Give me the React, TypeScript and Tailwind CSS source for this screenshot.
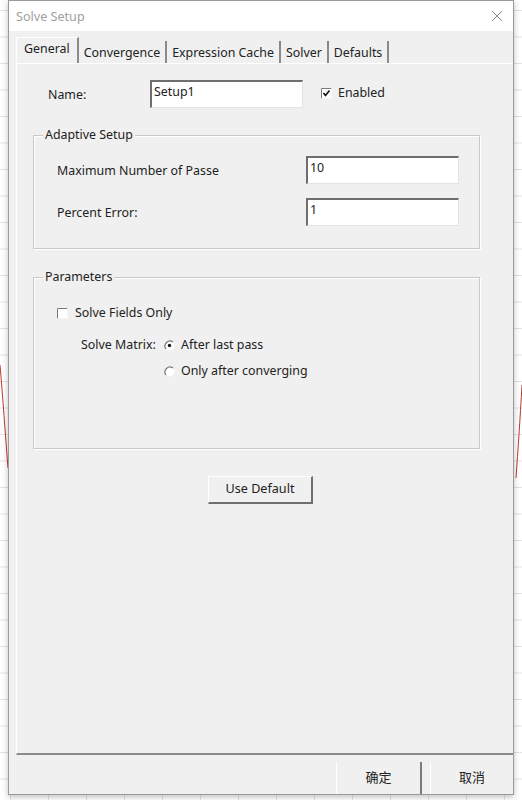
import React from "react";

const font = { fontFamily: '"Noto Sans", "Noto Sans CJK SC", sans-serif' };

function TextBox({ value, w }: { value: string; w: string }) {
    return (
        <div className={`${w} h-[28px] bg-white border-t-2 border-l-2 border-t-[#6e6e6e] border-l-[#6e6e6e] border-r border-b border-r-[#e4e4e4] border-b-[#e4e4e4] pl-[2px] text-[12.4px] leading-[20px] text-[#222]`}>
            {value}
        </div>
    );
}

function CheckBox({ checked }: { checked?: boolean }) {
    return (
        <svg width="11" height="11" viewBox="0 0 11 11" className="shrink-0">
            <rect x="0" y="0" width="11" height="11" fill="#ffffff" />
            <path d="M0.5 10.5 V0.5 H10.5" stroke="#7a7a7a" strokeWidth="1" fill="none" />
            <path d="M10.5 0.5 V10.5 H0.5" stroke="#f4f4f4" strokeWidth="1" fill="none" />
            {checked && (
                <path d="M2.5 5 L4.5 7.5 L8.5 2.5" stroke="#111" strokeWidth="1.6" fill="none" />
            )}
        </svg>
    );
}

function Radio({ checked }: { checked?: boolean }) {
    return (
        <svg width="11" height="11" viewBox="0 0 11 11" className="shrink-0">
            <circle cx="5.5" cy="5.5" r="5" fill="#ffffff" />
            <path d="M9 2 A5 5 0 0 0 2 9" stroke="#777" strokeWidth="1.2" fill="none" />
            {checked && <circle cx="5.5" cy="5.5" r="1.7" fill="#111" />}
        </svg>
    );
}

function GroupBox({ title, h, children }: { title: string; h: string; children: React.ReactNode }) {
    return (
        <div className={`relative w-[447px] ${h} border border-[#c9c9c9] shadow-[inset_1px_1px_0_#ffffff,1px_1px_0_#ffffff]`}>
            <span className="absolute -top-[10px] left-[9px] px-[2px] bg-[#f0f0f0] text-[12.4px] leading-[18px] text-[#222]">
                {title}
            </span>
            {children}
        </div>
    );
}

const tabs = ["General", "Convergence", "Expression Cache", "Solver", "Defaults"];

export default function App() {
    return (
        <div
            style={font}
            className="relative w-[522px] h-[800px] overflow-hidden bg-white bg-[linear-gradient(#e2e2e2_1px,transparent_1px),linear-gradient(90deg,#e2e2e2_1px,transparent_1px)] bg-[size:38px_26.5px] bg-[position:10px_10px]"
        >
            <svg className="absolute left-0 top-0" width="522" height="800">
                <path d="M0 365 C3 400 5 430 8 468" stroke="#c0392b" strokeWidth="1" fill="none" />
                <path d="M522 385 C520 420 518 450 516 478" stroke="#c0392b" strokeWidth="1" fill="none" />
            </svg>

            <div className="pl-[8px]">
                <div className="relative flex flex-col w-[506px] h-[795px] bg-[#f0f0f0] border border-[#9a9a9a] shadow-[0_2px_6px_rgba(0,0,0,0.25)]">
                    {/* title bar */}
                    <div className="flex items-center justify-between h-[30px] bg-white pl-[7px] pr-[10px]">
                        <span className="text-[12.6px] text-[#a0a0a0] pt-[2px]">Solve Setup</span>
                        <svg width="12" height="12" viewBox="0 0 12 12">
                            <path d="M1 1 L11 11 M11 1 L1 11" stroke="#8a8a8a" strokeWidth="1" />
                        </svg>
                    </div>

                    {/* tabs */}
                    <div className="flex items-end h-[26px] mt-[6px] pl-[7px]">
                        {tabs.map((t, i) => (
                            <div
                                key={t}
                                className={`flex items-center border-r-2 border-r-[#8a8a8a] text-[12.4px] text-[#222] ${i === 0 ? "h-[26px] px-[7px] pb-[2px] bg-[#f0f0f0] border-l border-l-white border-t border-t-white" : "h-[22px] pt-[2px] px-[5px]"}`}
                            >
                                {t}
                            </div>
                        ))}
                    </div>

                    {/* panel */}
                    <div className="flex flex-col h-[692px] ml-[7px] border-l border-t border-l-white border-t-white border-b-2 border-b-[#8c8c8c] pt-[16px] pl-[16px]">
                        <div className="flex items-center h-[27px]">
                            <span className="w-[117px] pl-[15px] pt-[3px] text-[12.4px] text-[#222]">Name:</span>
                            <TextBox value="Setup1" w="w-[153px]" />
                            <div className="flex items-center gap-[6px] ml-[18px]">
                                <CheckBox checked />
                                <span className="text-[12.4px] text-[#222]">Enabled</span>
                            </div>
                        </div>

                        <div className="mt-[28px]">
                            <GroupBox title="Adaptive Setup" h="h-[114px]">
                                <div className="flex flex-col gap-[14px] pt-[20px] pl-[23px]">
                                    <div className="flex items-center">
                                        <span className="w-[249px] pt-[2px] text-[12.4px] text-[#222]">Maximum Number of Passe</span>
                                        <TextBox value="10" w="w-[153px]" />
                                    </div>
                                    <div className="flex items-center">
                                        <span className="w-[249px] pt-[2px] text-[12.4px] text-[#222]">Percent Error:</span>
                                        <TextBox value="1" w="w-[153px]" />
                                    </div>
                                </div>
                            </GroupBox>
                        </div>

                        <div className="mt-[28px]">
                            <GroupBox title="Parameters" h="h-[172px]">
                                <div className="flex flex-col pt-[25px] pl-[23px]">
                                    <div className="flex items-center gap-[7px] h-[20px]">
                                        <CheckBox />
                                        <span className="text-[12.4px] text-[#222]">Solve Fields Only</span>
                                    </div>
                                    <div className="flex mt-[12px] pl-[24px]">
                                        <span className="w-[83px] text-[12.4px] leading-[20px] text-[#222]">Solve Matrix:</span>
                                        <div className="flex flex-col gap-[6px]">
                                            <div className="flex items-center gap-[6px] h-[20px]">
                                                <Radio checked />
                                                <span className="text-[12.4px] text-[#222]">After last pass</span>
                                            </div>
                                            <div className="flex items-center gap-[6px] h-[20px]">
                                                <Radio />
                                                <span className="text-[12.4px] text-[#222]">Only after converging</span>
                                            </div>
                                        </div>
                                    </div>
                                </div>
                            </GroupBox>
                        </div>

                        <button className="mt-[27px] ml-[175px] w-[105px] h-[28px] bg-[#f0f0f0] border-t border-l border-t-white border-l-white border-r-2 border-b-2 border-r-[#6f6f6f] border-b-[#6f6f6f] text-[12.6px] text-[#222]">
                            Use Default
                        </button>
                    </div>

                    {/* footer */}
                    <div className="flex justify-end gap-[8px] mt-[7px]">
                        <button className="w-[86px] h-[32px] bg-[#f0f0f0] border-l border-l-white border-r-2 border-r-[#7a7a7a] text-[13px] text-[#222]">
                            确定
                        </button>
                        <button className="w-[83px] h-[32px] bg-[#f0f0f0] border-l border-l-white text-[13px] text-[#222]">
                            取消
                        </button>
                    </div>
                </div>
            </div>
        </div>
    );
}
